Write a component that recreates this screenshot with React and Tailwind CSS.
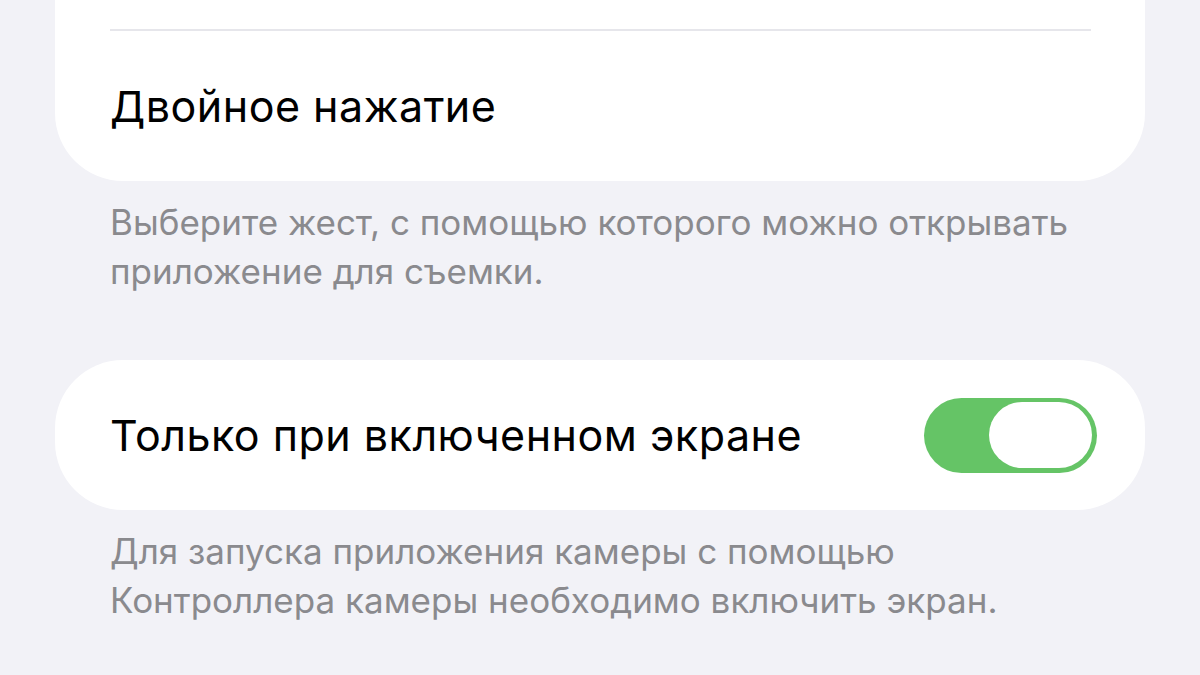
import React, { useState } from "react";

const Toggle = ({ on, onChange }) => (
  <button
    onClick={() => onChange(!on)}
    className={`relative flex h-[75px] w-[173px] shrink-0 items-center rounded-full px-[5px] ${
      on ? "justify-end bg-[#65c466]" : "justify-start bg-[#e9e9ea]"
    }`}
  >
    <span className="block h-[66px] w-[103px] rounded-full bg-white" />
  </button>
);

const App = () => {
  const [screenOnly, setScreenOnly] = useState(true);

  return (
    <div className="h-[675px] w-[1200px] overflow-hidden bg-[#f2f2f7] font-['Inter','Liberation_Sans',sans-serif]">
      <div className="mx-[55px] rounded-b-[68px] bg-white pt-[29px]">
        <div className="ml-[55px] mr-[54px] h-[2px] bg-[#e6e6eb]" />
        <div className="flex h-[150px] items-center px-[55px] text-[43px] tracking-[0.5px] text-black">
          Двойное нажатие
        </div>
      </div>

      <p className="mx-[110px] mt-[17px] text-[35px] leading-[49px] text-[#8a8a8e]">
        Выберите жест, с помощью которого можно открывать
        <br />
        приложение для съемки.
      </p>

      <div className="mx-[55px] mt-[64px] flex h-[150px] items-center justify-between rounded-[68px] bg-white pl-[55px] pr-[48px]">
        <span className="text-[43px] tracking-[0.5px] text-black">Только при включенном экране</span>
        <Toggle on={screenOnly} onChange={setScreenOnly} />
      </div>

      <p className="mx-[110px] mt-[17px] text-[35px] leading-[49px] text-[#8a8a8e]">
        Для запуска приложения камеры с помощью
        <br />
        Контроллера камеры необходимо включить экран.
      </p>
    </div>
  );
};

export default App;
